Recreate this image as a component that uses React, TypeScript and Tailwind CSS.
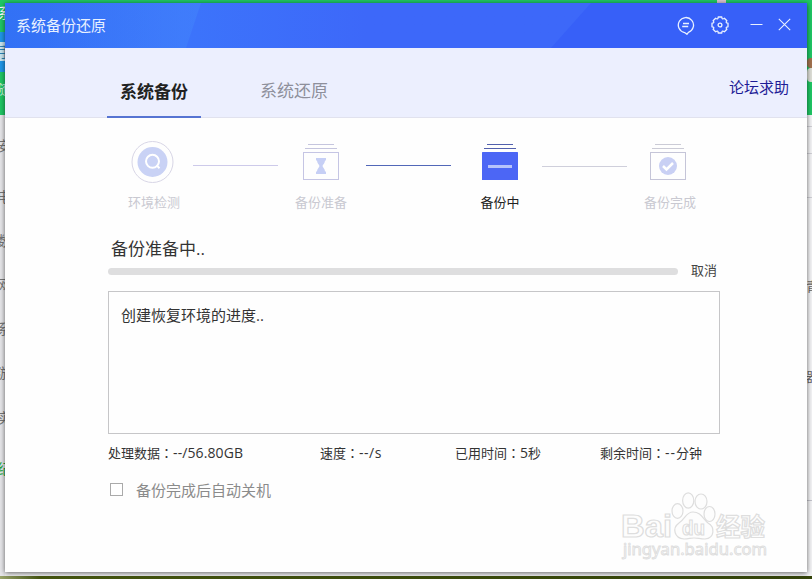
import type { ReactNode } from 'react';
import { useState } from 'react';

const sideItems = [
  { label: '安', top: 'top-[139px]', color: 'text-[#777]' },
  { label: '电', top: 'top-[190px]', color: 'text-[#777]' },
  { label: '数', top: 'top-[234px]', color: 'text-[#777]' },
  { label: '网', top: 'top-[278px]', color: 'text-[#777]' },
  { label: '系', top: 'top-[322px]', color: 'text-[#777]' },
  { label: '游', top: 'top-[366px]', color: 'text-[#777]' },
  { label: '实', top: 'top-[411px]', color: 'text-[#777]' },
  { label: '纪', top: 'top-[462px]', color: 'text-[#22a83a]' },
];

function Desktop() {
  return (
    <div className="flex h-full flex-col">
      <div className="flex h-[115px] justify-between bg-[#1fc765]">
        <div className="w-[5px] pt-8">
          <div className="h-[10px] bg-[#1f96e8]" />
          <div className="h-[19px] bg-[#c9e6f0]" />
          <div className="h-[11px] bg-[#1f96e8]" />
        </div>
        <div className="w-[5px] pt-[58px]">
          <div className="h-[10px] rounded-l bg-[#a2724f]" />
          <div className="h-[14px] rounded-l bg-[#dfe0d8]" />
        </div>
      </div>
      <div className="flex flex-1 justify-between bg-[#f0f0f2]">
        <div className="w-[5px] bg-[#e6e6e9]" />
        <div className="w-[5px] bg-[#f4f4f6]">
          <div className="mt-[11px] h-px bg-[#d0d0d6]" />
          <div className="mt-[26px] h-px bg-[#d0d0d6]" />
          <div className="mt-[43px] h-px bg-[#d0d0d6]" />
          <div className="mt-[302px] h-px bg-[#c4c4cc]" />
        </div>
      </div>
      <div className="h-[3px] bg-gradient-to-r from-[#9aa46b] via-[#45560f] via-5% to-[#34440a]" />
      <div className="absolute left-[717px] top-0 h-[3px] w-[9px] bg-[#d9c3cf]" />
      <span className="absolute -left-[2px] top-[6px] text-[14px] leading-none text-white">系</span>
      <span className="absolute -left-[2px] top-[45px] text-[14px] leading-none text-[#2b84b5]">手</span>
      <span className="absolute -left-[4px] top-[82px] text-[14px] leading-none text-[#c5f3d8]">随</span>
      {sideItems.map((item) => (
        <span
          key={item.label}
          className={`absolute -left-[3px] text-[14px] leading-none ${item.top} ${item.color}`}
        >
          {item.label}
        </span>
      ))}
      <span className="absolute left-[806px] top-[280px] text-[13px] leading-none text-[#666]">青</span>
      <span className="absolute left-[806px] top-[370px] text-[13px] leading-none text-[#666]">器</span>
    </div>
  );
}

function TitleBar() {
  return (
    <header className="relative flex h-[45px] shrink-0 items-center bg-gradient-to-r from-[#3271f5] via-[#3c74fb] via-22% to-[#3d68f9] to-45% pl-[11px] text-[#e9f1ff]">
      <svg className="absolute left-0 top-0" width="802" height="45">
        <defs>
          <linearGradient id="shine" x1="0" y1="0" x2="1" y2="0">
            <stop offset="0.2" stopColor="#3f83f8" stopOpacity="0" />
            <stop offset="1" stopColor="#4384fc" stopOpacity="0.55" />
          </linearGradient>
        </defs>
        <path d="M0 0H196L181 45H0Z" fill="url(#shine)" />
        <path d="M586 0H802V45H546Z" fill="#3760f8" />
      </svg>
      <h1 className="relative text-[15px] leading-none">系统备份还原</h1>
      <div className="relative -mt-[2px] ml-auto flex items-center pr-[16px]">
        <svg className="mt-[2px]" width="18" height="20" viewBox="0 0 18 20" fill="none" stroke="currentColor" strokeWidth="1.3">
          <path d="M7.6 16.600A7.600 7.600 0 1 1 11.400 16.300L9.900 18.300Z" strokeLinejoin="round" />
          <path d="M6 7.500H12M5.200 10.500H11.200" />
        </svg>
        <svg className="ml-[15px]" width="20" height="20" viewBox="0 0 20 20" fill="none" stroke="currentColor" strokeWidth="1.3" strokeLinejoin="round">
          <path d="M8.200 2H11.800Q11.800 5 14.400 3.200L16.900 5.700Q15 8.200 18 8.200V11.800Q15 11.800 16.900 14.300L14.400 16.800Q11.800 15 11.800 18H8.200Q8.200 15 5.600 16.800L3.100 14.300Q5 11.800 2 11.800V8.200Q5 8.200 3.100 5.700L5.600 3.200Q8.200 5 8.200 2Z" />
          <circle cx="10" cy="10" r="1.900" />
        </svg>
        <svg className="ml-[20px]" width="13" height="13" viewBox="0 0 13 13" stroke="currentColor">
          <path d="M0.5 6.5H12.5" />
        </svg>
        <svg className="ml-[15px]" width="13" height="13" viewBox="0 0 13 13" stroke="currentColor" strokeWidth="1.1">
          <path d="M0.8 0.8L12.2 12.2M12.2 0.8L0.8 12.2" />
        </svg>
      </div>
    </header>
  );
}

interface StepProps {
  label: string;
  active?: boolean;
  children: ReactNode;
}

function Step({ label, active, children }: StepProps) {
  return (
    <div className="flex w-16 flex-col items-center">
      <div className="flex h-[43px] items-start justify-center">{children}</div>
      <span className={`mt-[12px] text-[13px] leading-none ${active ? 'text-[#222]' : 'text-[#c9c9d1]'}`}>
        {label}
      </span>
    </div>
  );
}

function Steps() {
  return (
    <div className="flex h-[95px] pl-[117px] pt-[23px]">
      <Step label="环境检测">
        <svg className="-ml-[3px]" width="43" height="43" viewBox="0 0 43 43" fill="none">
          <circle cx="21.5" cy="21" r="20.5" stroke="#d8d6e6" />
          <circle cx="21.5" cy="21" r="15" fill="#c9d2f5" />
          <circle cx="21.5" cy="20.3" r="6.5" stroke="#fff" strokeWidth="2" />
          <path d="M25.5 24.3L28.5 27.3" stroke="#fff" strokeWidth="2" />
        </svg>
      </Step>
      <div className="ml-[7px] mt-6 h-px w-[85px] bg-[#cdcaea]" />
      <div className="ml-[11px]">
        <Step label="备份准备">
          <svg width="36" height="42" viewBox="0 0 36 42" fill="none">
            <path d="M5 3.5H31M2 7.5H34" stroke="#c5c5de" />
            <rect x="0.5" y="11.5" width="35" height="27" stroke="#c5c5e4" />
            <path d="M13 17H23V19.5H22C22 22 20 23.5 19.5 25C20 26.5 22 28 22 30.5H23V33H13V30.5H14C14 28 16 26.5 16.500 25C16 23.5 14 22 14 19.5H13Z" fill="#c6cff5" />
          </svg>
        </Step>
      </div>
      <div className="ml-[13px] mt-6 h-px w-[85px] bg-[#5267b8]" />
      <div className="ml-[17px]">
        <Step label="备份中" active>
          <svg width="36" height="42" viewBox="0 0 36 42">
            <path d="M5 3.5H31M2 7.5H34" stroke="#5260ad" />
            <rect y="11" width="36" height="28" rx="0.5" fill="#4c66f5" />
            <path d="M6 25.500H30" stroke="#b6c2fb" strokeWidth="3" />
          </svg>
        </Step>
      </div>
      <div className="ml-[10px] mt-[25px] h-px w-[85px] bg-[#cfcfdb]" />
      <div className="ml-[11px]">
        <Step label="备份完成">
          <svg className="-ml-[4px]" width="36" height="42" viewBox="0 0 36 42" fill="none">
            <path d="M5 3.5H31M2 7.5H34" stroke="#cbcbd6" />
            <rect x="0.5" y="11.5" width="35" height="27" stroke="#c5c5d8" />
            <circle cx="18" cy="25" r="9" fill="#c9d0f4" />
            <path d="M13 25L16.500 28.500L23 22" stroke="#fff" strokeWidth="2.500" />
          </svg>
        </Step>
      </div>
    </div>
  );
}

// full-width colon, centred in its cell
const Colon = () => <span className="font-['Noto_Sans_CJK_TC',sans-serif]">：</span>;

function Watermark() {
  return (
    <svg
      className="absolute bottom-[8px] left-[613px]"
      width="160"
      height="74"
      viewBox="0 0 160 74"
      fill="#fdfdfd"
      stroke="#dedede"
      strokeWidth="1.2"
    >
      <ellipse cx="59.500" cy="21" rx="5.500" ry="7.300" />
      <ellipse cx="70.200" cy="10.500" rx="5.600" ry="7.700" />
      <ellipse cx="83" cy="11.500" rx="6" ry="7.500" />
      <ellipse cx="91.500" cy="24" rx="5.500" ry="7.500" />
      <path d="M75 22C68 22 67 29 61 33C54 38 56 48 66 49C71 49 72 48 76 48C80 48 82 49 87 49C97 48 97 37 90 33C85 29 83 22 75 22Z" />
      <text x="3" y="47" fontSize="32" fontWeight="700" textLength="51" lengthAdjust="spacingAndGlyphs" fontFamily="Liberation Sans, sans-serif">Bai</text>
      <text x="64" y="45" fontSize="21" fontWeight="700" textLength="23" lengthAdjust="spacingAndGlyphs" fontFamily="Liberation Sans, sans-serif">du</text>
      <text x="98" y="45.500" fontSize="24.500" fontWeight="700" fontFamily="Noto Sans CJK SC, sans-serif">经验</text>
      <text x="5" y="65" fontSize="16" strokeWidth="0.9" textLength="144" lengthAdjust="spacingAndGlyphs" fontFamily="Noto Sans, sans-serif">jingyan.baidu.com</text>
    </svg>
  );
}

export default function App() {
  const [shutdown, setShutdown] = useState(false);

  return (
    <div className="relative h-[579px] w-[812px] overflow-hidden font-['Open_Sans','Noto_Sans_CJK_SC',sans-serif]">
      <Desktop />
      <div className="absolute left-[5px] top-[3px] flex h-[569px] w-[802px] flex-col bg-[#fefefe] shadow-[0_1px_5px_rgba(0,0,0,0.6)]">
        <TitleBar />
        <nav className="flex h-[70px] shrink-0 border-b border-[#e1e2ee] bg-[#eceffe] pl-[102px]">
          <button className="h-[70px] w-[94px] border-b-2 border-[#5674d2] pt-[18px] text-[17px] leading-none font-bold text-[#222]">
            系统备份
          </button>
          <button className="ml-[46px] h-[70px] w-[94px] pt-[15px] text-[17px] leading-none text-[#8e8f9b]">
            系统还原
          </button>
          <a href="#" className="ml-auto mt-[32px] pr-[18px] text-[15px] leading-none text-[#1e1c96]">
            论坛求助
          </a>
        </nav>

        <Steps />

        <main className="flex flex-col pl-[103px]">
          <h2 className="mt-[27px] pl-[3px] text-[17px] leading-[18px] text-[#333]">备份准备中..</h2>
          <div className="mt-[6px] flex h-[14px] items-center">
            <div className="h-[7px] w-[570px] rounded-full bg-[#dededf]" />
            <button className="-mt-px ml-[13px] text-[13px] leading-none text-[#444]">取消</button>
          </div>
          <div className="mt-[13px] h-[143px] w-[612px] border border-[#c6c6c8] px-3 pt-[16px] text-[15px] leading-none text-[#333]">
            创建恢复环境的进度..
          </div>
          <div className="mt-[12px] flex h-[14px] items-center text-[13px] leading-none text-[#333]">
            <div className="w-[212px]">处理数据<Colon /><span className="text-[14px] tracking-[0.1px]">--/56.80GB</span></div>
            <div className="w-[135px]">速度<Colon /><span className="text-[14px] tracking-[0.5px]">--/s</span></div>
            <div className="w-[145px]">已用时间<Colon /><span className="text-[14px]">5</span>秒</div>
            <div>剩余时间<Colon /><span className="text-[14px] tracking-[1px]">--</span>分钟</div>
          </div>
          <label className="mt-[22px] flex h-[16px] items-center pl-[2px] text-[15px] leading-none text-[#8b8b8b]">
            <input
              type="checkbox"
              checked={shutdown}
              onChange={(e) => setShutdown(e.target.checked)}
              className="-mt-px mr-[13px] h-[13px] w-[13px] appearance-none border border-[#aaa] bg-white checked:bg-[#4c66f5]"
            />
            备份完成后自动关机
          </label>
        </main>

        <Watermark />
      </div>
    </div>
  );
}
